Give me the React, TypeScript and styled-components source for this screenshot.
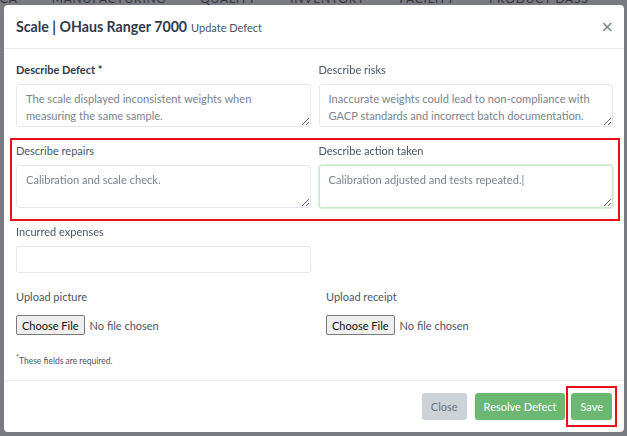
import styled, { createGlobalStyle } from "styled-components";

const GlobalStyle = createGlobalStyle`
  html, body {
    margin: 0;
    padding: 0;
    width: 627px;
    height: 436px;
    overflow: hidden;
    background: #7a7a83;
    font-family: "Lato", "Liberation Sans", sans-serif;
  }
`;

const Page = styled.div`
  position: relative;
  width: 627px;
  height: 436px;
  overflow: hidden;
  background: #7a7a83;
`;

// the app's top menu, mostly hidden behind the modal
const BackNav = styled.div`
  display: flex;
  gap: 34px;
  margin-top: -9px;
  font-size: 12px;
  font-weight: 400;
  letter-spacing: 0.8px;
  color: #34343c;
  white-space: nowrap;
`;

const Modal = styled.div`
  position: absolute;
  left: 4px;
  top: 5px;
  width: 620px;
  height: 427px;
  background: #fff;
  border-radius: 4px;
  display: flex;
  flex-direction: column;
  box-sizing: border-box;
`;

const Header = styled.div`
  height: 44px;
  box-sizing: border-box;
  border-bottom: 1px solid #e9ebee;
  display: flex;
  align-items: center;
  padding: 0 12px;
`;

const Title = styled.h5`
  margin: 0;
  flex: 1;
  font-size: 14.2px;
  font-weight: 700;
  color: #2f3a4c;
`;

const SubTitle = styled.span`
  font-size: 11px;
  font-weight: 400;
  color: #4a5568;
  margin-left: 4px;
`;

const CloseX = styled.button`
  border: none;
  background: none;
  padding: 0;
  margin-right: -2px;
  font-size: 16px;
  line-height: 1;
  color: #7a808a;
  font-family: "DejaVu Sans", sans-serif;
`;

const Body = styled.div`
  flex: 1;
  padding: 13px 11px 0 12px;
`;

const Row = styled.div<{ $gap?: number }>`
  display: grid;
  grid-template-columns: 1fr 1fr;
  column-gap: ${(p) => p.$gap ?? 8}px;
  margin-bottom: 16px;
`;

const Highlight = styled.div`
  border: 2px solid #e8101c;
  margin: -5px -7px 3px -6px;
  padding: 3px 5px 11px 4px;

  & > ${Row} {
    margin-bottom: 0;
  }
`;

const Field = styled.div`
  display: flex;
  flex-direction: column;
`;

const Label = styled.label<{ $bold?: boolean; $space?: number }>`
  font-size: 11px;
  line-height: 16px;
  font-weight: ${(p) => (p.$bold ? 700 : 400)};
  color: ${(p) => (p.$bold ? "#2f3a4c" : "#4a5568")};
  margin-bottom: ${(p) => p.$space ?? 6}px;
`;

const TextArea = styled.textarea<{ $focused?: boolean }>`
  box-sizing: border-box;
  height: 43px;
  width: 100%;
  resize: vertical;
  border: 1px solid ${(p) => (p.$focused ? "#c9e7c9" : "#e3e6ea")};
  box-shadow: ${(p) => (p.$focused ? "0 0 0 1px #dff0df" : "none")};
  border-radius: 3px;
  padding: 5px 14px 4px 9px;
  font-family: "Lato", "Liberation Sans", sans-serif;
  font-size: 11.1px;
  line-height: 17px;
  color: #7a8391;
  outline: none;
`;

const TextInput = styled.input`
  box-sizing: border-box;
  height: 27px;
  width: 100%;
  border: 1px solid #e3e6ea;
  border-radius: 3px;
  padding: 0 9px;
  outline: none;
`;

const FileRow = styled.div`
  display: flex;
  align-items: center;
  gap: 5px;
  font-size: 11px;
  color: #4a5568;
`;

const FileButton = styled.span`
  box-sizing: border-box;
  height: 20px;
  padding: 0 5px;
  display: inline-flex;
  align-items: center;
  background: #efefef;
  border: 1px solid #7a7a7a;
  border-radius: 2px;
  font-size: 11px;
  color: #111;
`;

const Note = styled.p`
  margin: 18px 0 0;
  font-size: 8.5px;
  color: #4a5568;
`;

const Footer = styled.div`
  border-top: 1px solid #e9ebee;
  padding: 12px;
  display: flex;
  justify-content: flex-end;
  align-items: center;
`;

const Button = styled.button<{ $variant: "muted" | "success"; $marked?: boolean }>`
  position: relative;
  height: 27px;
  padding: 0 9px;
  border: none;
  border-radius: 3px;
  font-family: "Lato", "Liberation Sans", sans-serif;
  font-size: 11px;
  background: ${(p) => (p.$variant === "muted" ? "#cdd1d8" : "#6cb872")};
  color: ${(p) => (p.$variant === "muted" ? "#6b7280" : "#ffffff")};
  margin-left: ${(p) => (p.$marked ? 6 : 8)}px;

  ${(p) =>
    p.$marked &&
    `
    &::after {
      content: "";
      position: absolute;
      inset: -7px -5px -7px -5px;
      border: 2px solid #e8101c;
    }
  `}
`;

export default function App() {
  return (
    <>
      <GlobalStyle />
      <Page>
        <BackNav>
          <span>CA</span>
          <span>MANUFACTURING</span>
          <span>QUALITY</span>
          <span>INVENTORY</span>
          <span>FACILITY</span>
          <span>PRODUCT DASS</span>
        </BackNav>
        <Modal>
          <Header>
            <Title>
              Scale | OHaus Ranger 7000<SubTitle>Update Defect</SubTitle>
            </Title>
            <CloseX>×</CloseX>
          </Header>
          <Body>
            <Row>
              <Field>
                <Label $bold>Describe Defect *</Label>
                <TextArea
                  readOnly
                  value="The scale displayed inconsistent weights when measuring the same sample."
                />
              </Field>
              <Field>
                <Label>Describe risks</Label>
                <TextArea
                  readOnly
                  value="Inaccurate weights could lead to non-compliance with GACP standards and incorrect batch documentation."
                />
              </Field>
            </Row>
            <Highlight>
              <Row>
                <Field>
                  <Label>Describe repairs</Label>
                  <TextArea readOnly value="Calibration and scale check." />
                </Field>
                <Field>
                  <Label>Describe action taken</Label>
                  <TextArea $focused readOnly value="Calibration adjusted and tests repeated.|" />
                </Field>
              </Row>
            </Highlight>
            <Row>
              <Field>
                <Label>Incurred expenses</Label>
                <TextInput />
              </Field>
            </Row>
            <Row $gap={23}>
              <Field>
                <Label $space={10}>Upload picture</Label>
                <FileRow>
                  <FileButton>Choose File</FileButton>
                  No file chosen
                </FileRow>
              </Field>
              <Field>
                <Label $space={10}>Upload receipt</Label>
                <FileRow>
                  <FileButton>Choose File</FileButton>
                  No file chosen
                </FileRow>
              </Field>
            </Row>
            <Note>
              <sup>*</sup>These fields are required.
            </Note>
          </Body>
          <Footer>
            <Button $variant="muted">Close</Button>
            <Button $variant="success">Resolve Defect</Button>
            <Button $variant="success" $marked>
              Save
            </Button>
          </Footer>
        </Modal>
      </Page>
    </>
  );
}
